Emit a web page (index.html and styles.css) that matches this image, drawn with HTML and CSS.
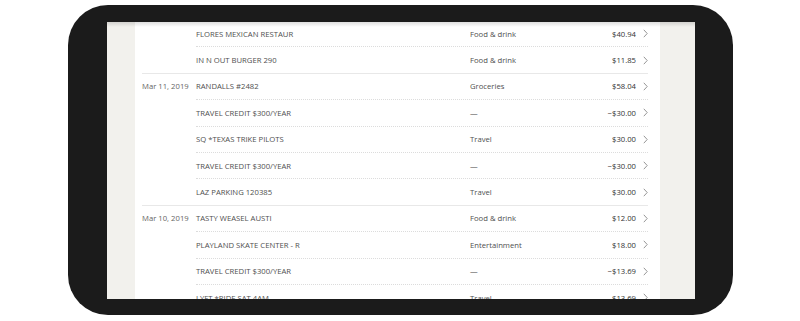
FILE: index.html
```html
<!DOCTYPE html>
<html>
<head>
<meta charset="utf-8">
<link rel="stylesheet" href="styles.css">
</head>
<body>
<div class="frame">
  <div class="screen">
    <div class="card">
      <div class="group">
        <div class="date"></div>
        <div class="rows">
          <div class="row"><span class="merchant">FLORES MEXICAN RESTAUR</span><span class="cat">Food &amp; drink</span><span class="amt">$40.94</span><svg class="chev" width="5" height="9" viewBox="0 0 5 9"><polyline points="0.8,0.8 4.2,4.5 0.8,8.2"/></svg></div>
          <div class="row"><span class="merchant">IN N OUT BURGER 290</span><span class="cat">Food &amp; drink</span><span class="amt">$11.85</span><svg class="chev" width="5" height="9" viewBox="0 0 5 9"><polyline points="0.8,0.8 4.2,4.5 0.8,8.2"/></svg></div>
        </div>
      </div>
      <div class="group">
        <div class="date">Mar 11, 2019</div>
        <div class="rows">
          <div class="row"><span class="merchant">RANDALLS #2482</span><span class="cat">Groceries</span><span class="amt">$58.04</span><svg class="chev" width="5" height="9" viewBox="0 0 5 9"><polyline points="0.8,0.8 4.2,4.5 0.8,8.2"/></svg></div>
          <div class="row"><span class="merchant">TRAVEL CREDIT $300/YEAR</span><span class="cat">—</span><span class="amt">−$30.00</span><svg class="chev" width="5" height="9" viewBox="0 0 5 9"><polyline points="0.8,0.8 4.2,4.5 0.8,8.2"/></svg></div>
          <div class="row"><span class="merchant">SQ *TEXAS TRIKE PILOTS</span><span class="cat">Travel</span><span class="amt">$30.00</span><svg class="chev" width="5" height="9" viewBox="0 0 5 9"><polyline points="0.8,0.8 4.2,4.5 0.8,8.2"/></svg></div>
          <div class="row"><span class="merchant">TRAVEL CREDIT $300/YEAR</span><span class="cat">—</span><span class="amt">−$30.00</span><svg class="chev" width="5" height="9" viewBox="0 0 5 9"><polyline points="0.8,0.8 4.2,4.5 0.8,8.2"/></svg></div>
          <div class="row"><span class="merchant">LAZ PARKING 120385</span><span class="cat">Travel</span><span class="amt">$30.00</span><svg class="chev" width="5" height="9" viewBox="0 0 5 9"><polyline points="0.8,0.8 4.2,4.5 0.8,8.2"/></svg></div>
        </div>
      </div>
      <div class="group">
        <div class="date">Mar 10, 2019</div>
        <div class="rows">
          <div class="row"><span class="merchant">TASTY WEASEL AUSTI</span><span class="cat">Food &amp; drink</span><span class="amt">$12.00</span><svg class="chev" width="5" height="9" viewBox="0 0 5 9"><polyline points="0.8,0.8 4.2,4.5 0.8,8.2"/></svg></div>
          <div class="row"><span class="merchant">PLAYLAND SKATE CENTER - R</span><span class="cat">Entertainment</span><span class="amt">$18.00</span><svg class="chev" width="5" height="9" viewBox="0 0 5 9"><polyline points="0.8,0.8 4.2,4.5 0.8,8.2"/></svg></div>
          <div class="row"><span class="merchant">TRAVEL CREDIT $300/YEAR</span><span class="cat">—</span><span class="amt">−$13.69</span><svg class="chev" width="5" height="9" viewBox="0 0 5 9"><polyline points="0.8,0.8 4.2,4.5 0.8,8.2"/></svg></div>
          <div class="row"><span class="merchant">LYFT *RIDE SAT 4AM</span><span class="cat">Travel</span><span class="amt">$13.69</span><svg class="chev" width="5" height="9" viewBox="0 0 5 9"><polyline points="0.8,0.8 4.2,4.5 0.8,8.2"/></svg></div>
        </div>
      </div>
    </div>
  </div>
</div>
</body>
</html>
```
FILE: styles.css
```css
html, body {
  margin: 0;
  padding: 0;
  background: #ffffff;
}
body {
  font-family: "Open Sans", "Liberation Sans", sans-serif;
  font-size: 7.7px;
  color: #4f4f4f;
}
.frame {
  margin: 5px 0 0 68px;
  width: 665px;
  height: 310px;
  box-sizing: border-box;
  padding: 17px 38px 16px 39px;
  background: #1b1b1b;
  border-radius: 40px;
}
.screen {
  position: relative;
  height: 277px;
  background: #f2f1ed;
  overflow: hidden;
  padding-left: 28px;
}
.screen::before {
  content: "";
  position: absolute;
  left: 0;
  right: 0;
  top: 0;
  height: 5px;
  background: linear-gradient(rgba(0,0,0,0.13), rgba(0,0,0,0));
  z-index: 2;
}
.card {
  width: 525px;
  box-sizing: border-box;
  background: #fff;
  margin-top: -2px;
  padding: 0 12px 0 7px;
  height: 290px;
}
.group {
  display: flex;
  border-top: 1px solid #e8e8e8;
}
.date {
  flex: 0 0 54px;
  height: 25.4px;
  line-height: 25.4px;
  white-space: nowrap;
  color: #666;
}
.rows {
  flex: 1;
}
.row {
  display: flex;
  align-items: center;
  box-sizing: border-box;
  height: 26.4px;
  border-top: 1px dotted #dcdcdc;
}
.row:first-child {
  border-top: 0;
  height: 25.4px;
}
.merchant {
  flex: 0 0 274px;
  white-space: nowrap;
}
.cat {
  flex: 1;
  white-space: nowrap;
}
.amt {
  color: #333;
  font-weight: 500;
}
.chev {
  margin-left: 7px;
  fill: none;
  stroke: #8a8a8a;
  stroke-width: 0.9;
}
```
